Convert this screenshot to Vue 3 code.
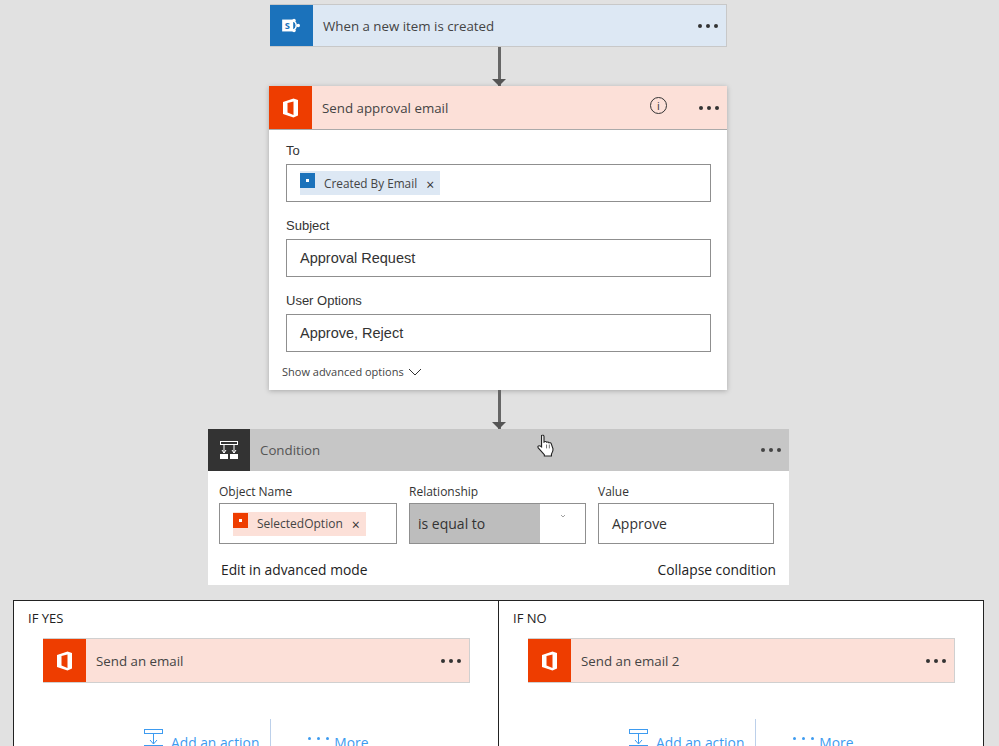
<template>
  <div class="canvas">
    <div class="card-head trigger">
      <div class="tile tile-blue">
        <svg width="21" height="17" viewBox="0 0 24 20">
          <rect x="1" y="3" width="13" height="14" fill="#fff" />
          <path d="M14 4.500a6 6 0 0 1 0 11" fill="none" stroke="#fff" stroke-width="1.600" />
          <circle cx="15" cy="4" r="2" fill="#fff" />
          <circle cx="20" cy="10" r="2" fill="#fff" />
          <circle cx="15" cy="16" r="2" fill="#fff" />
          <text x="4" y="14" class="sp-letter">S</text>
        </svg>
      </div>
      <span class="head-title">When a new item is created</span>
      <span class="dots"><i></i><i></i><i></i></span>
    </div>

    <div class="arrow"></div>

    <div class="card email-card">
      <div class="card-head head-red">
        <div class="tile tile-red">
          <svg width="20" height="22" viewBox="0 0 20 22">
            <path
              fill="#fff"
              d="M2 5 L12.500 1.500 L17 3 V18.500 L12.500 20.500 L2 17 Z M12.500 4.500 L6.500 6 V15.500 L12.500 18 Z"
              fill-rule="evenodd"
            />
          </svg>
        </div>
        <span class="head-title">Send approval email</span>
        <span class="info">i</span>
        <span class="dots"><i></i><i></i><i></i></span>
      </div>
      <div class="email-body">
        <label class="field-label first">To</label>
        <div class="input token-input">
          <span class="token token-blue">
            <span class="mini mini-blue"><b></b></span>
            Created By Email
            <span class="token-x">×</span>
          </span>
        </div>
        <label class="field-label">Subject</label>
        <div class="input">Approval Request</div>
        <label class="field-label">User Options</label>
        <div class="input">Approve, Reject</div>
        <div class="advanced">
          Show advanced options
          <svg width="14" height="8" viewBox="0 0 14 8">
            <path d="M1 1l6 6 6-6" fill="none" stroke="#333" stroke-width="1" />
          </svg>
        </div>
      </div>
    </div>

    <div class="arrow"></div>

    <div class="card condition">
      <div class="card-head head-grey">
        <div class="tile tile-dark">
          <svg width="20" height="20" viewBox="0 0 20 20" fill="none" stroke="#fff">
            <rect x="1.500" y="1.500" width="17" height="3" stroke-width="1" />
            <path d="M5 5v8M15 5v8M3 10l2 3 2-3M13 10l2 3 2-3" stroke-width="1" />
            <rect x="1" y="14" width="8" height="5" fill="#fff" stroke="none" />
            <rect x="11" y="14" width="8" height="5" fill="#fff" stroke="none" />
          </svg>
        </div>
        <span class="head-title">Condition</span>
        <span class="dots dots-small"><i></i><i></i><i></i></span>
      </div>
      <div class="cond-grid">
        <div class="cond-col">
          <label class="cond-label">Object Name</label>
          <div class="input cond-input">
            <span class="token token-red">
              <span class="mini mini-red"><b></b></span>
              SelectedOption
              <span class="token-x">×</span>
            </span>
          </div>
        </div>
        <div class="cond-col">
          <label class="cond-label">Relationship</label>
          <div class="input cond-input select">
            <span class="select-value">is equal to</span>
            <span class="select-caret">
              <svg width="6" height="4" viewBox="0 0 6 4">
                <path d="M1 1l2 2 2-2" fill="none" stroke="#888" stroke-width="0.800" />
              </svg>
            </span>
          </div>
        </div>
        <div class="cond-col">
          <label class="cond-label">Value</label>
          <div class="input cond-input value">Approve</div>
        </div>
      </div>
      <div class="cond-foot">
        <span>Edit in advanced mode</span>
        <span>Collapse condition</span>
      </div>
    </div>

    <div class="branches">
      <div v-for="b in branches" :key="b.label" class="branch">
        <div class="branch-label">{{ b.label }}</div>
        <div class="card-head head-red branch-card">
          <div class="tile tile-red">
            <svg width="20" height="22" viewBox="0 0 20 22">
              <path
                fill="#fff"
                d="M2 5 L12.500 1.500 L17 3 V18.500 L12.500 20.500 L2 17 Z M12.500 4.500 L6.500 6 V15.500 L12.500 18 Z"
                fill-rule="evenodd"
              />
            </svg>
          </div>
          <span class="head-title">{{ b.title }}</span>
          <span class="dots"><i></i><i></i><i></i></span>
        </div>
        <div class="actions">
          <div class="action add">
            <svg width="20" height="18" viewBox="0 0 20 18" fill="none" stroke="#3d9bf0">
              <rect x="0.500" y="0.500" width="18" height="4" />
              <path d="M9.500 5v10M6 11l3.500 4 3.500-4" />
              <rect x="0" y="16" width="19" height="2" fill="#3d9bf0" stroke="none" />
            </svg>
            <span>Add an action</span>
          </div>
          <div class="action more">
            <span class="more-dots"><i></i><i></i><i></i></span>
            <span>More</span>
          </div>
        </div>
      </div>
    </div>

    <svg class="cursor" width="20" height="23" viewBox="0 0 18 24" preserveAspectRatio="none">
      <path
        d="M5 1.500c1 -.8 2.200 0 2.200 1v6l.6-.4c.8-.4 1.600-.1 1.900.5.7-.5 1.700-.2 2 .6.8-.4 1.800 0 2 .8l1.600 5.500c.3 2-.6 4-1.400 5.500v2H7.500v-1.500L2 14.500c-1-1.500.4-2.800 1.700-2l1.300 1Z"
        fill="#fff"
        stroke="#222"
        stroke-width="1"
      />
      <path d="M9.500 11v4M12 11v4" stroke="#555" stroke-width="0.800" />
    </svg>
  </div>
</template>

<script setup>
const branches = [
  { label: "IF YES", title: "Send an email" },
  { label: "IF NO", title: "Send an email 2" },
];
</script>

<style>
html,
body {
  margin: 0;
  background: #e1e1e1;
}
</style>

<style scoped>
.canvas {
  position: relative;
  width: 999px;
  height: 746px;
  overflow: hidden;
  background: #e1e1e1;
  display: flex;
  flex-direction: column;
  align-items: center;
  padding: 4px 2px 0 0;
  box-sizing: border-box;
  font-family: "Open Sans", "Noto Sans", sans-serif;
  color: #333;
}

.card-head {
  display: flex;
  align-items: center;
  height: 43px;
  flex-shrink: 0;
  box-sizing: border-box;
}
.trigger {
  width: 457px;
  background: #dde8f4;
  border: 1px solid #c8c8c8;
  border-left: 0;
}
.head-red {
  background: #fce0d8;
}
.head-grey {
  background: #c6c6c6;
}

.tile {
  width: 43px;
  height: 100%;
  display: flex;
  align-items: center;
  justify-content: center;
  flex-shrink: 0;
}
.tile-blue {
  background: #1b72bb;
}
.tile-red {
  background: #ee3d00;
}
.tile-dark {
  background: #333;
}
.sp-letter {
  font-size: 11px;
  font-weight: 700;
  fill: #1b72bb;
}

.head-title {
  flex: 1;
  margin-left: 10px;
  font-size: 13.300px;
  color: #444;
  white-space: nowrap;
}

.dots {
  display: flex;
  gap: 4px;
  margin-right: 8px;
}
.dots i {
  width: 4px;
  height: 4px;
  border-radius: 50%;
  background: #333;
}
.dots-small i {
  background: #444;
}

.info {
  width: 15px;
  height: 15px;
  border: 1px solid #333;
  border-radius: 50%;
  margin-right: 32px;
  margin-top: -4px;
  font-size: 11px;
  line-height: 15px;
  text-align: center;
}

.arrow {
  position: relative;
  width: 3px;
  height: 39px;
  margin-left: 1px;
  background: #666;
  flex-shrink: 0;
}
.arrow::after {
  content: "";
  position: absolute;
  left: -6px;
  bottom: 0;
  border-left: 7.500px solid transparent;
  border-right: 7.500px solid transparent;
  border-top: 7px solid #555;
}

.card {
  background: #fff;
  flex-shrink: 0;
}
.email-card {
  width: 458px;
  margin-right: 1px;
  box-shadow: 0 1px 5px rgba(0, 0, 0, 0.25);
}
.email-card .head-red {
  height: 44px;
  border-bottom: 1px solid #aaa;
}
.email-card .head-title {
  padding-top: 1px;
}
.email-body {
  height: 260px;
  box-sizing: border-box;
  padding: 13px 16px 0 17px;
}
.field-label {
  display: block;
  font-family: "Liberation Sans", Arial, sans-serif;
  font-size: 13px;
  line-height: 16px;
  margin: 16px 0 5px;
  color: #333;
}
.field-label.first {
  margin-top: 0;
}

.input {
  height: 38px;
  box-sizing: border-box;
  border: 1px solid #8f8f8f;
  background: #fff;
  display: flex;
  align-items: center;
  padding-left: 13px;
  font-family: "Liberation Sans", Arial, sans-serif;
  font-size: 14.500px;
  color: #333;
}
.token-input {
  align-items: flex-start;
  padding-top: 6px;
}

.token {
  display: inline-flex;
  align-items: center;
  height: 24px;
  font-family: "Open Sans", "Noto Sans", sans-serif;
  font-size: 11.800px;
  white-space: nowrap;
  color: #444;
}
.token-blue {
  background: #dde8f4;
}
.token-red {
  background: #fce0d8;
  font-size: 12px;
}
.mini {
  width: 15px;
  height: 15px;
  margin: -6px 9px 0 0;
  display: flex;
  align-items: center;
  justify-content: center;
}
.mini b {
  width: 3px;
  height: 3px;
  background: #fff;
}
.mini-blue {
  background: #1b72bb;
}
.mini-red {
  background: #ee3d00;
}
.token-x {
  margin: 3px 6px 0 9px;
  font-size: 14px;
  line-height: 14px;
  color: #333;
}
.token-red .token-x {
  margin: 3px 6px 0 9px;
}

.advanced {
  display: flex;
  align-items: center;
  gap: 4px;
  margin: 12px 0 0 -4px;
  font-size: 11px;
  line-height: 16px;
  color: #444;
}

.condition {
  width: 581px;
  height: 156px;
}
.condition .card-head {
  height: 42px;
}
.condition .tile {
  width: 42px;
}
.condition .head-title {
  color: #555;
}
.condition .dots {
  margin-right: 8px;
}

.cond-grid {
  display: grid;
  grid-template-columns: 178px 177px 176px;
  column-gap: 12px;
  padding: 13px 15px 0 11px;
}
.cond-label {
  display: block;
  font-size: 12px;
  line-height: 16px;
  margin-bottom: 3px;
}
.cond-input {
  height: 41px;
  font-family: "Open Sans", "Noto Sans", sans-serif;
  font-size: 14px;
}
.select {
  padding-left: 0;
}
.select-value {
  flex: 1;
  align-self: stretch;
  background: #bdbdbd;
  display: flex;
  align-items: center;
  padding-left: 8px;
}
.select-caret {
  width: 45px;
  text-align: center;
  align-self: flex-start;
  line-height: 10px;
  margin-top: 4px;
}

.cond-foot {
  display: flex;
  justify-content: space-between;
  padding: 17px 13px 0 13px;
  font-size: 13.800px;
  line-height: 18px;
  color: #222;
}

.branches {
  display: grid;
  grid-template-columns: 484px 1fr;
  width: 971px;
  height: 200px;
  margin-top: 15px;
  box-sizing: border-box;
  border: 1px solid #222;
  background: #fff;
  flex-shrink: 0;
}
.branch {
  position: relative;
  box-sizing: border-box;
  padding: 8px 0 0 14px;
}
.branch + .branch {
  border-left: 1px solid #222;
}
.branch-label {
  font-size: 13px;
  line-height: 18px;
  color: #222;
}
.branch-card {
  width: 427px;
  height: 45px;
  margin: 11px 0 0 15px;
  border: 1px solid #d0d0d0;
  border-left: 0;
}
.actions {
  display: flex;
  margin: 36px 0 0 116px;
  height: 40px;
  color: #3d9bf0;
  font-size: 13.800px;
}
.action {
  display: flex;
  align-items: flex-start;
}
.add {
  gap: 7px;
  padding-top: 10px;
  padding-right: 11px;
  border-right: 1px solid #bcd0ea;
}
.add span,
.more > span:last-child {
  margin-top: 4px;
}
.more {
  padding: 10px 0 0 37px;
  gap: 5px;
}
.more-dots {
  display: flex;
  gap: 6px;
  margin-top: 8px;
}
.more-dots i {
  width: 3px;
  height: 3px;
  border-radius: 50%;
  background: #3d9bf0;
}

.cursor {
  position: absolute;
  left: 536px;
  top: 434px;
}
</style>
